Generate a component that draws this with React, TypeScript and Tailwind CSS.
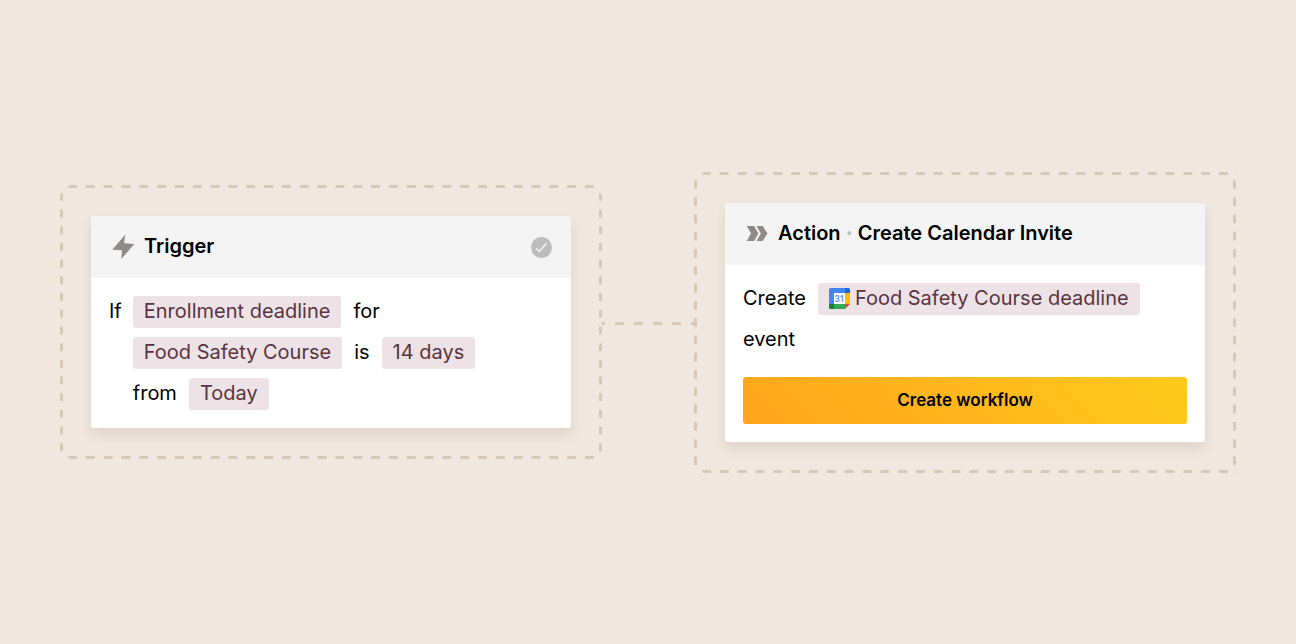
import React from 'react';

type StepProps = {
  icon: React.ReactNode;
  title: React.ReactNode;
  status?: React.ReactNode;
  children: React.ReactNode;
};

const BoltIcon = () => (
  <svg className="w-6 h-[26px] shrink-0" viewBox="0 0 24 26" fill="#8f8989" aria-hidden="true">
    <path d="M14.3 .4 L13 9.2 L23.3 10 L10.3 25 L11 16.3 L1.3 15.8 Z" />
  </svg>
);

const ChevronsIcon = () => (
  <svg className="w-6 h-[26px] shrink-0" viewBox="0 0 24 26" fill="#8f8989" aria-hidden="true">
    <path d="M1.8 5h7.3l4.2 7.5L9.1 20H1.8L6 12.5Z" />
    <path d="M11.5 5h6.2l4.8 7.5-4.8 7.5h-6.2l4.4-7.5Z" />
  </svg>
);

const CheckBadge = () => (
  <svg className="w-[21px] h-[21px]" viewBox="0 0 21 21" role="img" aria-label="Done">
    <circle cx="10.5" cy="10.5" r="10.5" fill="#bcbcbc" />
    <path d="M5.2 11.4 8.3 14.5 15.4 6.2" fill="none" stroke="#f4f4f4" strokeWidth="1.5" />
  </svg>
);

const CalendarIcon = () => (
  <svg className="w-[21px] h-[21px] shrink-0" viewBox="0 0 21 21" aria-hidden="true">
    <path d="M1.6 0H16v5H5v11H0V1.6A1.6 1.6 0 0 1 1.6 0Z" fill="#4285f4" />
    <path d="M16 0h3.4A1.6 1.6 0 0 1 21 1.6V5h-5Z" fill="#1967d2" />
    <path d="M16 5h5v11h-5Z" fill="#fbbc04" />
    <path d="M5 16h11v5H5Z" fill="#34a853" />
    <path d="M0 16h5v5H1.6A1.6 1.6 0 0 1 0 19.4Z" fill="#188038" />
    <path d="M16 16h5l-5 5Z" fill="#ea4335" />
    <path d="M5 5h11v11H5Z" fill="#fff" />
    <text x="10.5" y="13.7" textAnchor="middle" fontSize="8.5" fontWeight="500" fontFamily="Roboto, sans-serif" fill="#4285f4">
      31
    </text>
  </svg>
);

const Word = ({ children }: { children: React.ReactNode }) => (
  <span className="pb-[2px] whitespace-nowrap">{children}</span>
);

const Chip = ({ icon, children }: { icon?: React.ReactNode; children: React.ReactNode }) => (
  <span className="inline-flex items-center gap-[5px] h-8 px-[11px] rounded-[3px] bg-[#ede3e7] text-[#59343f]">
    {icon}
    <Word>{children}</Word>
  </span>
);

const Row = ({ children }: { children: React.ReactNode }) => (
  <div className="flex items-center gap-3 min-h-8">{children}</div>
);

// the dashes stretch a little so that every side starts and ends on one
const DashedFrame = ({ children }: { children: React.ReactNode }) => (
  <div className="relative p-[31px]">
    <span className="absolute top-0 left-2 right-[-1px] h-[3px] rounded-tl-[3px] bg-[linear-gradient(to_right,#d6c8b7_50%,transparent_50%)] bg-[length:18px_3px] bg-repeat-round" />
    <span className="absolute bottom-0 left-2 right-[-1px] h-[3px] rounded-bl-[3px] bg-[linear-gradient(to_right,#d6c8b7_50%,transparent_50%)] bg-[length:18px_3px] bg-repeat-round" />
    <span className="absolute left-0 top-2 bottom-[-1px] w-[3px] rounded-tl-[3px] bg-[linear-gradient(to_bottom,#d6c8b7_50%,transparent_50%)] bg-[length:3px_17px] bg-repeat-round" />
    <span className="absolute right-0 top-2 bottom-[-1px] w-[3px] rounded-tr-[3px] bg-[linear-gradient(to_bottom,#d6c8b7_50%,transparent_50%)] bg-[length:3px_17px] bg-repeat-round" />
    {children}
  </div>
);

const Connector = () => (
  <div className="flex justify-between h-[3px] mt-[2px]">
    <span className="w-[3px] bg-[#d6c8b7]" />
    <span className="flex-1 mx-[5px] bg-[linear-gradient(to_right,transparent_25%,#d6c8b7_25%,#d6c8b7_75%,transparent_75%)] bg-[length:19px_3px] bg-repeat-round" />
    <span className="w-[3px] bg-[#d6c8b7]" />
  </div>
);

const StepCard: React.FC<StepProps> = ({ icon, title, status, children }) => (
  <DashedFrame>
    <section className="rounded-[3px] bg-white overflow-hidden shadow-[0_7px_12px_rgba(80,50,40,0.1)]">
      <header className="flex items-center h-[62px] pl-5 pr-[19px] bg-[#f4f4f4]">
        {icon}
        <h2 className="ml-[9px] pb-[2px] flex-1 text-[20px] leading-6 font-semibold">{title}</h2>
        {status}
      </header>
      <div className="p-[18px] text-[20px] leading-6">{children}</div>
    </section>
  </DashedFrame>
);

export default function App() {
  return (
    <main className="min-h-screen grid grid-cols-[1fr_92px_1fr] items-center px-[60px] bg-[#f0e7de] text-black font-['Inter',sans-serif]">
      <StepCard icon={<BoltIcon />} title="Trigger" status={<CheckBadge />}>
        <div className="flex items-start gap-[11px]">
          <Row>
            <Word>If</Word>
          </Row>
          <div className="space-y-[9px]">
            <Row>
              <Chip>Enrollment deadline</Chip>
              <Word>for</Word>
            </Row>
            <Row>
              <Chip>Food Safety Course</Chip>
              <Word>is</Word>
              <Chip>14 days</Chip>
            </Row>
            <Row>
              <Word>from</Word>
              <Chip>Today</Chip>
            </Row>
          </div>
        </div>
      </StepCard>

      <Connector />

      <StepCard
        icon={<ChevronsIcon />}
        title={
          <>
            Action <span className="text-[#bcbcbc] font-extrabold">·</span> Create Calendar Invite
          </>
        }
      >
        <div className="space-y-[9px]">
          <Row>
            <Word>Create</Word>
            <Chip icon={<CalendarIcon />}>Food Safety Course deadline</Chip>
          </Row>
          <Row>
            <Word>event</Word>
          </Row>
        </div>
        <button
          type="button"
          className="mt-[21px] w-full h-[47px] rounded-[3px] bg-[linear-gradient(45deg,#ffa41c,#ffcb1c)] text-[17px] leading-6 font-semibold"
        >
          Create workflow
        </button>
      </StepCard>
    </main>
  );
}
